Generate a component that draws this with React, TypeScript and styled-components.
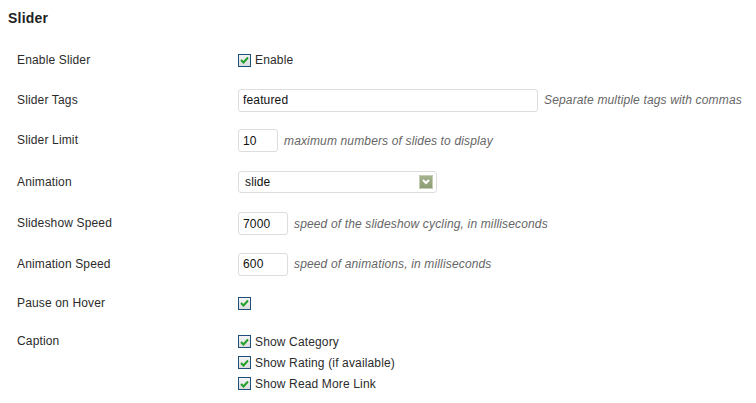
import styled, { createGlobalStyle } from "styled-components";

const GlobalStyle = createGlobalStyle`
  body {
    margin: 0;
    background: #ffffff;
    font-family: "Liberation Sans", Arial, sans-serif;
    font-size: 12px;
    letter-spacing: 0.15px;
    color: #333333;
  }
`;

interface IRow {
  $height: number;
}

const Page = styled.div`
  padding: 10px 0 0 8px;
`;

const Title = styled.h3`
  margin: 0 0 13px;
  font-size: 14px;
  line-height: 17px;
  font-weight: bold;
  letter-spacing: 0.2px;
  color: #222222;
`;

const Form = styled.div`
  padding-left: 9px;
`;

const Row = styled.div<IRow>`
  display: grid;
  grid-template-columns: 221px 1fr;
  align-items: center;
  height: ${(props) => props.$height}px;
`;

const CaptionRow = styled.div`
  display: grid;
  grid-template-columns: 221px 1fr;
  align-items: start;
  padding-top: 9px;
`;

const Label = styled.div`
  font-size: 12px;
  line-height: 21px;
  color: #2b2b2b;
`;

const Field = styled.div`
  display: flex;
  align-items: center;
`;

const Stack = styled.div`
  display: flex;
  flex-direction: column;
`;

const CheckLine = styled.label`
  display: flex;
  align-items: center;
  height: 21px;
  gap: 4px;
  color: #2b2b2b;
`;

const Box = styled.span`
  display: inline-flex;
  align-items: center;
  justify-content: center;
  box-sizing: border-box;
  width: 13px;
  height: 13px;
  border: 1px solid #1e4f7a;
  background: linear-gradient(#f4f4f4, #dcdcdc);
`;

const TextInput = styled.input<{ $width: number }>`
  box-sizing: border-box;
  width: ${(props) => props.$width}px;
  height: 23px;
  padding: 0 4px;
  border: 1px solid #dddddd;
  border-radius: 3px;
  background: #ffffff;
  font-family: "Liberation Sans", Arial, sans-serif;
  font-size: 12px;
  letter-spacing: 0.15px;
  color: #111111;
  outline: none;
`;

const Help = styled.span`
  margin-left: 6px;
  font-style: italic;
  color: #666666;
`;

const Select = styled.div`
  box-sizing: border-box;
  display: flex;
  align-items: center;
  justify-content: space-between;
  width: 199px;
  height: 22px;
  padding: 0 3px 0 6px;
  border: 1px solid #dddddd;
  border-radius: 3px;
  background: #ffffff;
  color: #111111;
`;

const Arrow = styled.span`
  display: inline-flex;
  align-items: center;
  justify-content: center;
  box-sizing: border-box;
  width: 14px;
  height: 14px;
  border: 1px solid #c3ccb4;
  background: linear-gradient(#a4b38d, #8c9c74);
`;

const Check = () => (
  <svg width="9" height="8" viewBox="0 0 9 8">
    <path
      d="M1 4 L3.5 6.5 L8 1.5"
      fill="none"
      stroke="#22a02a"
      strokeWidth="2"
    />
  </svg>
);

const CheckBox = ({ text }: { text?: string }) => (
  <CheckLine>
    <Box role="checkbox" aria-checked="true">
      <Check />
    </Box>
    {text}
  </CheckLine>
);

const App = () => {
  return (
    <>
      <GlobalStyle />
      <Page>
        <Title>Slider</Title>
        <Form>
          <Row $height={40}>
            <Label>Enable Slider</Label>
            <Field>
              <CheckBox text="Enable" />
            </Field>
          </Row>
          <Row $height={40}>
            <Label>Slider Tags</Label>
            <Field>
              <TextInput $width={300} defaultValue="featured" />
              <Help>Separate multiple tags with commas</Help>
            </Field>
          </Row>
          <Row $height={41}>
            <Label>Slider Limit</Label>
            <Field>
              <TextInput $width={40} defaultValue="10" />
              <Help>maximum numbers of slides to display</Help>
            </Field>
          </Row>
          <Row $height={42}>
            <Label>Animation</Label>
            <Field>
              <Select>
                slide
                <Arrow>
                  <svg width="8" height="6" viewBox="0 0 8 6">
                    <path
                      d="M1 1 L4 4 L7 1"
                      fill="none"
                      stroke="#ffffff"
                      strokeWidth="2"
                    />
                  </svg>
                </Arrow>
              </Select>
            </Field>
          </Row>
          <Row $height={41}>
            <Label>Slideshow Speed</Label>
            <Field>
              <TextInput $width={50} defaultValue="7000" />
              <Help>speed of the slideshow cycling, in milliseconds</Help>
            </Field>
          </Row>
          <Row $height={40}>
            <Label>Animation Speed</Label>
            <Field>
              <TextInput $width={50} defaultValue="600" />
              <Help>speed of animations, in milliseconds</Help>
            </Field>
          </Row>
          <Row $height={38}>
            <Label>Pause on Hover</Label>
            <Field>
              <CheckBox />
            </Field>
          </Row>
          <CaptionRow>
            <Label>Caption</Label>
            <Stack>
              <CheckBox text="Show Category" />
              <CheckBox text="Show Rating (if available)" />
              <CheckBox text="Show Read More Link" />
            </Stack>
          </CaptionRow>
        </Form>
      </Page>
    </>
  );
};

export default App;
